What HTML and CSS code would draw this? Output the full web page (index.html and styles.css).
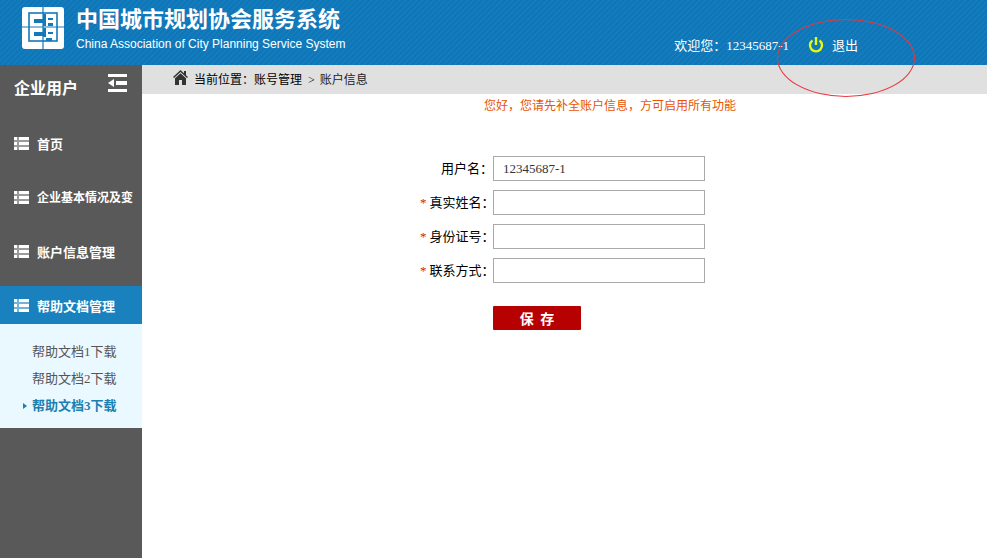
FILE: index.html
```html
<!DOCTYPE html>
<html lang="zh-CN">
  <head>
    <meta charset="UTF-8" />
    <meta name="viewport" content="width=device-width, initial-scale=1.0" />
    <title>中国城市规划协会服务系统</title>
    <link rel="stylesheet" href="styles.css">
  </head>
  <body>
    <header class="header">
      <div class="brand">
        <svg class="logo" viewBox="0 0 42 42" aria-hidden="true">
          <rect width="42" height="42" rx="3" fill="#fff" />
          <g fill="none" stroke="#1479ba">
            <path d="M21 0V42M0 20H42" stroke-width="1.200" />
            <rect x="7" y="6" width="28" height="28" stroke-width="1.600" />
          </g>
          <g fill="#1479ba">
            <path d="M12 12H21V16H12zM12 25H21V29H12z" />
            <path d="M21 7H24V19H21zM21 21H24V30H21z" />
            <path d="M26 11H31V13H26zM26 16H31V19H26z" />
            <path d="M26 25H31V27H26zM24 31H30V34H24z" />
          </g>
        </svg>
        <div class="brand-text">
          <h1>中国城市规划协会服务系统</h1>
          <p>China Association of City Planning Service System</p>
        </div>
      </div>
      <div class="user">
        <span>欢迎您：12345687-1</span>
        <a class="logout" href="#">
          <svg width="16" height="18" viewBox="0 0 16 18" fill="none" stroke="#e6f910" stroke-width="2.400" aria-hidden="true">
            <path d="M4.500 4.500A6 6 0 1 0 11.500 4.500M8 1V9" />
          </svg>
          退出
        </a>
      </div>
      <span class="mark"></span>
    </header>

    <div class="page">
      <aside class="sidebar">
        <div class="sidebar-title">
          <h2>企业用户</h2>
          <button type="button" class="collapse" aria-label="收起菜单">
            <svg width="19" height="18" viewBox="0 0 19 18" fill="#fff" aria-hidden="true">
              <path d="M0 0H19V3H0zM0 15H19V18H0zM8 7H19V11H8zM0 9L6 5V13z" />
            </svg>
          </button>
        </div>
        <nav class="menu">
          <a class="menu-item" href="#">
            <svg class="list-icon" viewBox="0 0 15 13" aria-hidden="true"><path d="M0 0H15V13H0z" opacity="0.400" /><path d="M0 0H3V3H0zM5 0H15V3H5zM0 5H3V8H0zM5 5H15V8H5zM0 10H3V13H0zM5 10H15V13H5z" /></svg>
            首页
          </a>
          <a class="menu-item menu-item-long" href="#">
            <svg class="list-icon" viewBox="0 0 15 13" aria-hidden="true"><path d="M0 0H15V13H0z" opacity="0.400" /><path d="M0 0H3V3H0zM5 0H15V3H5zM0 5H3V8H0zM5 5H15V8H5zM0 10H3V13H0zM5 10H15V13H5z" /></svg>
            企业基本情况及变
          </a>
          <a class="menu-item" href="#">
            <svg class="list-icon" viewBox="0 0 15 13" aria-hidden="true"><path d="M0 0H15V13H0z" opacity="0.400" /><path d="M0 0H3V3H0zM5 0H15V3H5zM0 5H3V8H0zM5 5H15V8H5zM0 10H3V13H0zM5 10H15V13H5z" /></svg>
            账户信息管理
          </a>
          <a class="menu-item active" href="#">
            <svg class="list-icon" viewBox="0 0 15 13" aria-hidden="true"><path d="M0 0H15V13H0z" opacity="0.400" /><path d="M0 0H3V3H0zM5 0H15V3H5zM0 5H3V8H0zM5 5H15V8H5zM0 10H3V13H0zM5 10H15V13H5z" /></svg>
            帮助文档管理
          </a>
        </nav>
        <ul class="submenu">
          <li><a href="#">帮助文档1下载</a></li>
          <li><a href="#">帮助文档2下载</a></li>
          <li><a class="current" href="#">帮助文档3下载</a></li>
        </ul>
      </aside>

      <main class="content">
        <div class="breadcrumb">
          <svg width="15" height="15" viewBox="0 0 15 15" fill="#333" aria-hidden="true">
            <path d="M0 7L7.500 0L11 3.300V1H13V5.200L15 7L14 8L7.500 2L1 8z" />
            <path d="M2 8.200L7.500 3.200L13 8.200V15H9V10H6V15H2z" />
          </svg>
          <span>当前位置：账号管理</span>
          <span class="separator">&gt;</span>
          <span class="here">账户信息</span>
        </div>

        <div class="account">
          <p class="notice">您好，您请先补全账户信息，方可启用所有功能</p>
          <form class="account-form">
            <label for="username">用户名：</label>
            <input type="text" id="username" value="12345687-1" />

            <label for="realName"><span class="required">*</span>真实姓名：</label>
            <input type="text" id="realName" />

            <label for="idCard"><span class="required">*</span>身份证号：</label>
            <input type="text" id="idCard" />

            <label for="contact"><span class="required">*</span>联系方式：</label>
            <input type="text" id="contact" />

            <button type="submit" class="save">保&nbsp; 存</button>
          </form>
        </div>
      </main>
    </div>
  </body>
</html>
```

FILE: styles.css
```css
* {
  box-sizing: border-box;
}

body {
  display: flex;
  flex-direction: column;
  min-height: 100vh;
  margin: 0;
  font-family: "Liberation Serif", "Noto Sans CJK SC", sans-serif;
  font-size: 13px;
  color: #000;
  background: #fff;
}

h1,
h2,
p,
ul {
  margin: 0;
  padding: 0;
}

a {
  color: inherit;
  text-decoration: none;
}

/* Header */
.header {
  position: relative;
  display: flex;
  justify-content: space-between;
  height: 65px;
  padding: 0 129px 0 22px;
  color: #fff;
  background: repeating-linear-gradient(135deg, #0f76b8 0, #0f76b8 2px, #1781c1 3px, #0f76b8 4px);
}

.brand {
  display: flex;
  gap: 12px;
  padding-top: 7px;
}

.logo {
  width: 42px;
  height: 42px;
}

.brand-text h1 {
  font-size: 22px;
  line-height: 26px;
}

.brand-text p {
  font-family: "Liberation Sans", Arial, sans-serif;
  font-size: 12px;
  line-height: 22px;
}

.user {
  display: flex;
  align-items: center;
  gap: 19px;
  padding-top: 24px;
  white-space: nowrap;
}

.logout {
  display: flex;
  align-items: center;
  gap: 8px;
}

.mark {
  position: absolute;
  top: 19px;
  right: 72px;
  z-index: 1;
  width: 138px;
  height: 78px;
  border: 1px solid #e8383d;
  border-radius: 50%;
  pointer-events: none;
}

/* Sidebar */
.page {
  display: flex;
  flex: 1;
}

.sidebar {
  flex: none;
  width: 142px;
  color: #fff;
  background: #595959;
}

.sidebar-title {
  display: flex;
  align-items: center;
  justify-content: space-between;
  height: 59px;
  padding: 0 15px 15px 14px;
}

.sidebar-title h2 {
  font-size: 16px;
}

.collapse {
  display: flex;
  padding: 0 0 8px;
  border: none;
  background: none;
  cursor: pointer;
}

.menu {
  display: flex;
  flex-direction: column;
  gap: 16px;
}

.menu-item {
  display: flex;
  align-items: center;
  gap: 8px;
  height: 38px;
  padding-left: 14px;
  font-weight: bold;
  white-space: nowrap;
}

.menu-item-long {
  font-size: 12px;
}

.menu-item.active {
  background: #1881be;
}

.list-icon {
  width: 15px;
  height: 13px;
  fill: #fff;
}

.submenu {
  padding: 14px 0 9px 32px;
  list-style: none;
  line-height: 27px;
  color: #555;
  background: #eaf8ff;
}

.submenu a {
  position: relative;
  display: block;
}

.submenu .current {
  font-weight: bold;
  color: #1d7fae;
}

.submenu .current::before {
  content: "";
  position: absolute;
  top: 11px;
  left: -9px;
  border: 3px solid transparent;
  border-left: 4px solid #1d7fae;
  border-right: none;
}

/* Content */
.content {
  flex: 1;
}

.breadcrumb {
  display: flex;
  align-items: center;
  height: 29px;
  padding-left: 31px;
  font-size: 12px;
  line-height: 24px;
  background: #e0e0e0;
}

.breadcrumb svg {
  margin: 0 6px 4px 0;
}

.separator {
  padding: 0 5px 0 6px;
}

.here {
  color: #222;
}

.account {
  padding-left: 91px;
}

.notice {
  font-size: 12px;
  line-height: 24px;
  text-align: center;
  color: #e85400;
}

.account-form {
  display: grid;
  grid-template-columns: 73px 212px;
  row-gap: 9px;
  width: 380px;
  margin: 38px auto 0;
}

.account-form label {
  line-height: 25px;
  text-align: right;
  white-space: nowrap;
}

.required {
  margin-right: 3px;
  color: #e01010;
}

.account-form input {
  width: 100%;
  height: 25px;
  padding: 0 9px;
  border: 1px solid #a9a9a9;
  font-family: inherit;
  font-size: 13px;
  color: #333;
}

.save {
  grid-column: 2;
  width: 88px;
  height: 24px;
  margin-top: 14px;
  padding: 0;
  border: none;
  border-radius: 1px;
  font-family: "Noto Sans CJK SC", sans-serif;
  font-size: 14px;
  font-weight: bold;
  line-height: 24px;
  color: #fff;
  background: #b70000;
  cursor: pointer;
}
```
